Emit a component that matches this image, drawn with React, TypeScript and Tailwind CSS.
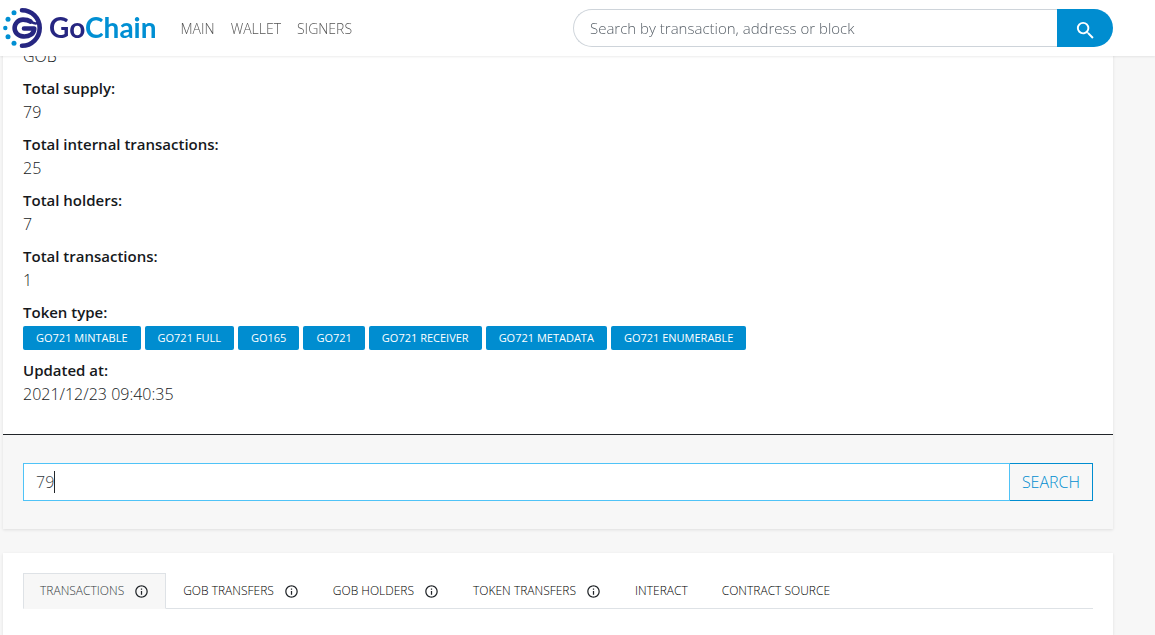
import React from "react";
import { MdInfoOutline, MdSearch } from "react-icons/md";

const tokenTypes = [
  "GO721 MINTABLE",
  "GO721 FULL",
  "GO165",
  "GO721",
  "GO721 RECEIVER",
  "GO721 METADATA",
  "GO721 ENUMERABLE",
];

const tabs = [
  { label: "TRANSACTIONS", info: true },
  { label: "GOB TRANSFERS", info: true },
  { label: "GOB HOLDERS", info: true },
  { label: "TOKEN TRANSFERS", info: true },
  { label: "INTERACT", info: false },
  { label: "CONTRACT SOURCE", info: false },
];

const navLinks = ["MAIN", "WALLET", "SIGNERS"];

function LogoMark() {
  return (
    <svg viewBox="0 0 42 42" className="h-[42px] w-[42px]" aria-hidden="true">
      <g fill="none" stroke="#262681" strokeLinecap="round" strokeLinejoin="round">
        <path d="M19 3.300A17.700 17.700 0 0 1 19 38.700" strokeWidth="4.600" />
        <path d="M27.500 14.500C25 12.800 22.500 12.600 20 12.600A8.400 8.400 0 0 0 20 29.400C26.500 29.800 31 27 31.300 21.500H21" strokeWidth="4.600" />
        <path d="M27.500 14.500C29 15.300 32 17.500 34 16" strokeWidth="2.500" />
      </g>
      <g fill="#008fd3">
        <circle cx="11" cy="5.700" r="2.500" />
        <circle cx="5" cy="12.200" r="2.500" />
        <circle cx="2.300" cy="21" r="2.200" />
        <circle cx="5" cy="29.700" r="2.500" />
        <circle cx="11" cy="36.200" r="2.500" />
      </g>
    </svg>
  );
}

function Field({ label, children }: { label: string; children: React.ReactNode }) {
  return (
    <div className="mb-2">
      <dt className="text-[15px] leading-6 font-semibold">{label}</dt>
      <dd>{children}</dd>
    </div>
  );
}

export default function App() {
  return (
    <div className="min-h-screen bg-[#f7f7f7] font-['Open_Sans',sans-serif] text-base leading-6 font-light text-[#16191c]">
      <header className="fixed inset-x-0 top-0 z-10 bg-white shadow-[0_1px_2px_rgba(0,0,0,0.08)]">
        <div className="ml-[3px] flex h-14 max-w-[1110px] items-center">
          <a href="#" className="flex items-center gap-1">
            <LogoMark />
            <span className="pb-0.5 font-['Lato',sans-serif] text-[28px] leading-8 font-bold text-[#262681]">
              Go<span className="text-[#008fd3]">Chain</span>
            </span>
          </a>
          <nav className="ml-6 flex flex-1 gap-4 pt-0.5 text-sm leading-6 text-[#555555]">
            {navLinks.map((link) => (
              <a key={link} href="#">{link}</a>
            ))}
          </nav>
          <form className="flex h-[38px] w-[540px]" onSubmit={(e) => e.preventDefault()}>
            <input
              aria-label="Search by transaction, address or block"
              placeholder="Search by transaction, address or block"
              className="min-w-0 flex-1 rounded-l-full border border-r-0 border-[#ced4da] bg-white px-4 text-[15px] outline-none placeholder:text-[#596169]"
            />
            <button aria-label="Search" className="flex w-14 items-center justify-center rounded-r-full bg-[#008dd0] pt-1 text-white">
              <MdSearch size={23} />
            </button>
          </form>
        </div>
      </header>

      <main className="ml-[3px] max-w-[1110px] pt-11">
        <section className="mb-6 shadow-[0_1px_3px_rgba(0,0,0,0.1)]">
          <dl className="border-b border-[#212529] bg-white px-5 pb-5">
            <div className="mb-2">
              <dd>GOB</dd>
            </div>
            <Field label="Total supply:">79</Field>
            <Field label="Total internal transactions:">25</Field>
            <Field label="Total holders:">7</Field>
            <Field label="Total transactions:">1</Field>
            <Field label="Token type:">
              <ul className="flex flex-wrap gap-1 pt-0.5 text-[11px] leading-6 font-medium text-white">
                {tokenTypes.map((type) => (
                  <li key={type} className="rounded-[2px] bg-[#008dd0] px-[13px]">{type}</li>
                ))}
              </ul>
            </Field>
            <Field label="Updated at:">2021/12/23 09:40:35</Field>
          </dl>
          <form className="flex px-5 py-7" onSubmit={(e) => e.preventDefault()}>
            <div className="relative min-w-0 flex-1">
              <input
                aria-label="Token ID"
                defaultValue="79"
                className="h-[38px] w-full border border-[#4fc3f7] bg-white px-3 text-[#343a40] caret-transparent outline-none"
              />
              <span aria-hidden="true" className="absolute top-2 left-[31px] h-[22px] w-px bg-[#212529]" />
            </div>
            <button className="h-[38px] border border-l-0 border-[#008dd0] px-3 text-[#008dd0]">SEARCH</button>
          </form>
        </section>

        <section className="min-h-[82px] bg-white px-5 pt-5 shadow-[0_1px_3px_rgba(0,0,0,0.1)]">
          <div role="tablist" className="flex border-b border-[#dee2e6] text-xs">
            {tabs.map((tab, index) => (
              <button
                key={tab.label}
                role="tab"
                aria-selected={index === 0}
                className="-mb-px flex h-9 items-center border border-transparent px-4 text-black aria-selected:border-[#dee2e6] aria-selected:border-b-[#f7f7f7] aria-selected:bg-[#f7f7f7] aria-selected:text-[#343a40]"
              >
                {tab.label}
                {tab.info && <MdInfoOutline size={15} className="ml-2.5 text-[#212529]" />}
              </button>
            ))}
          </div>
        </section>
      </main>
    </div>
  );
}
